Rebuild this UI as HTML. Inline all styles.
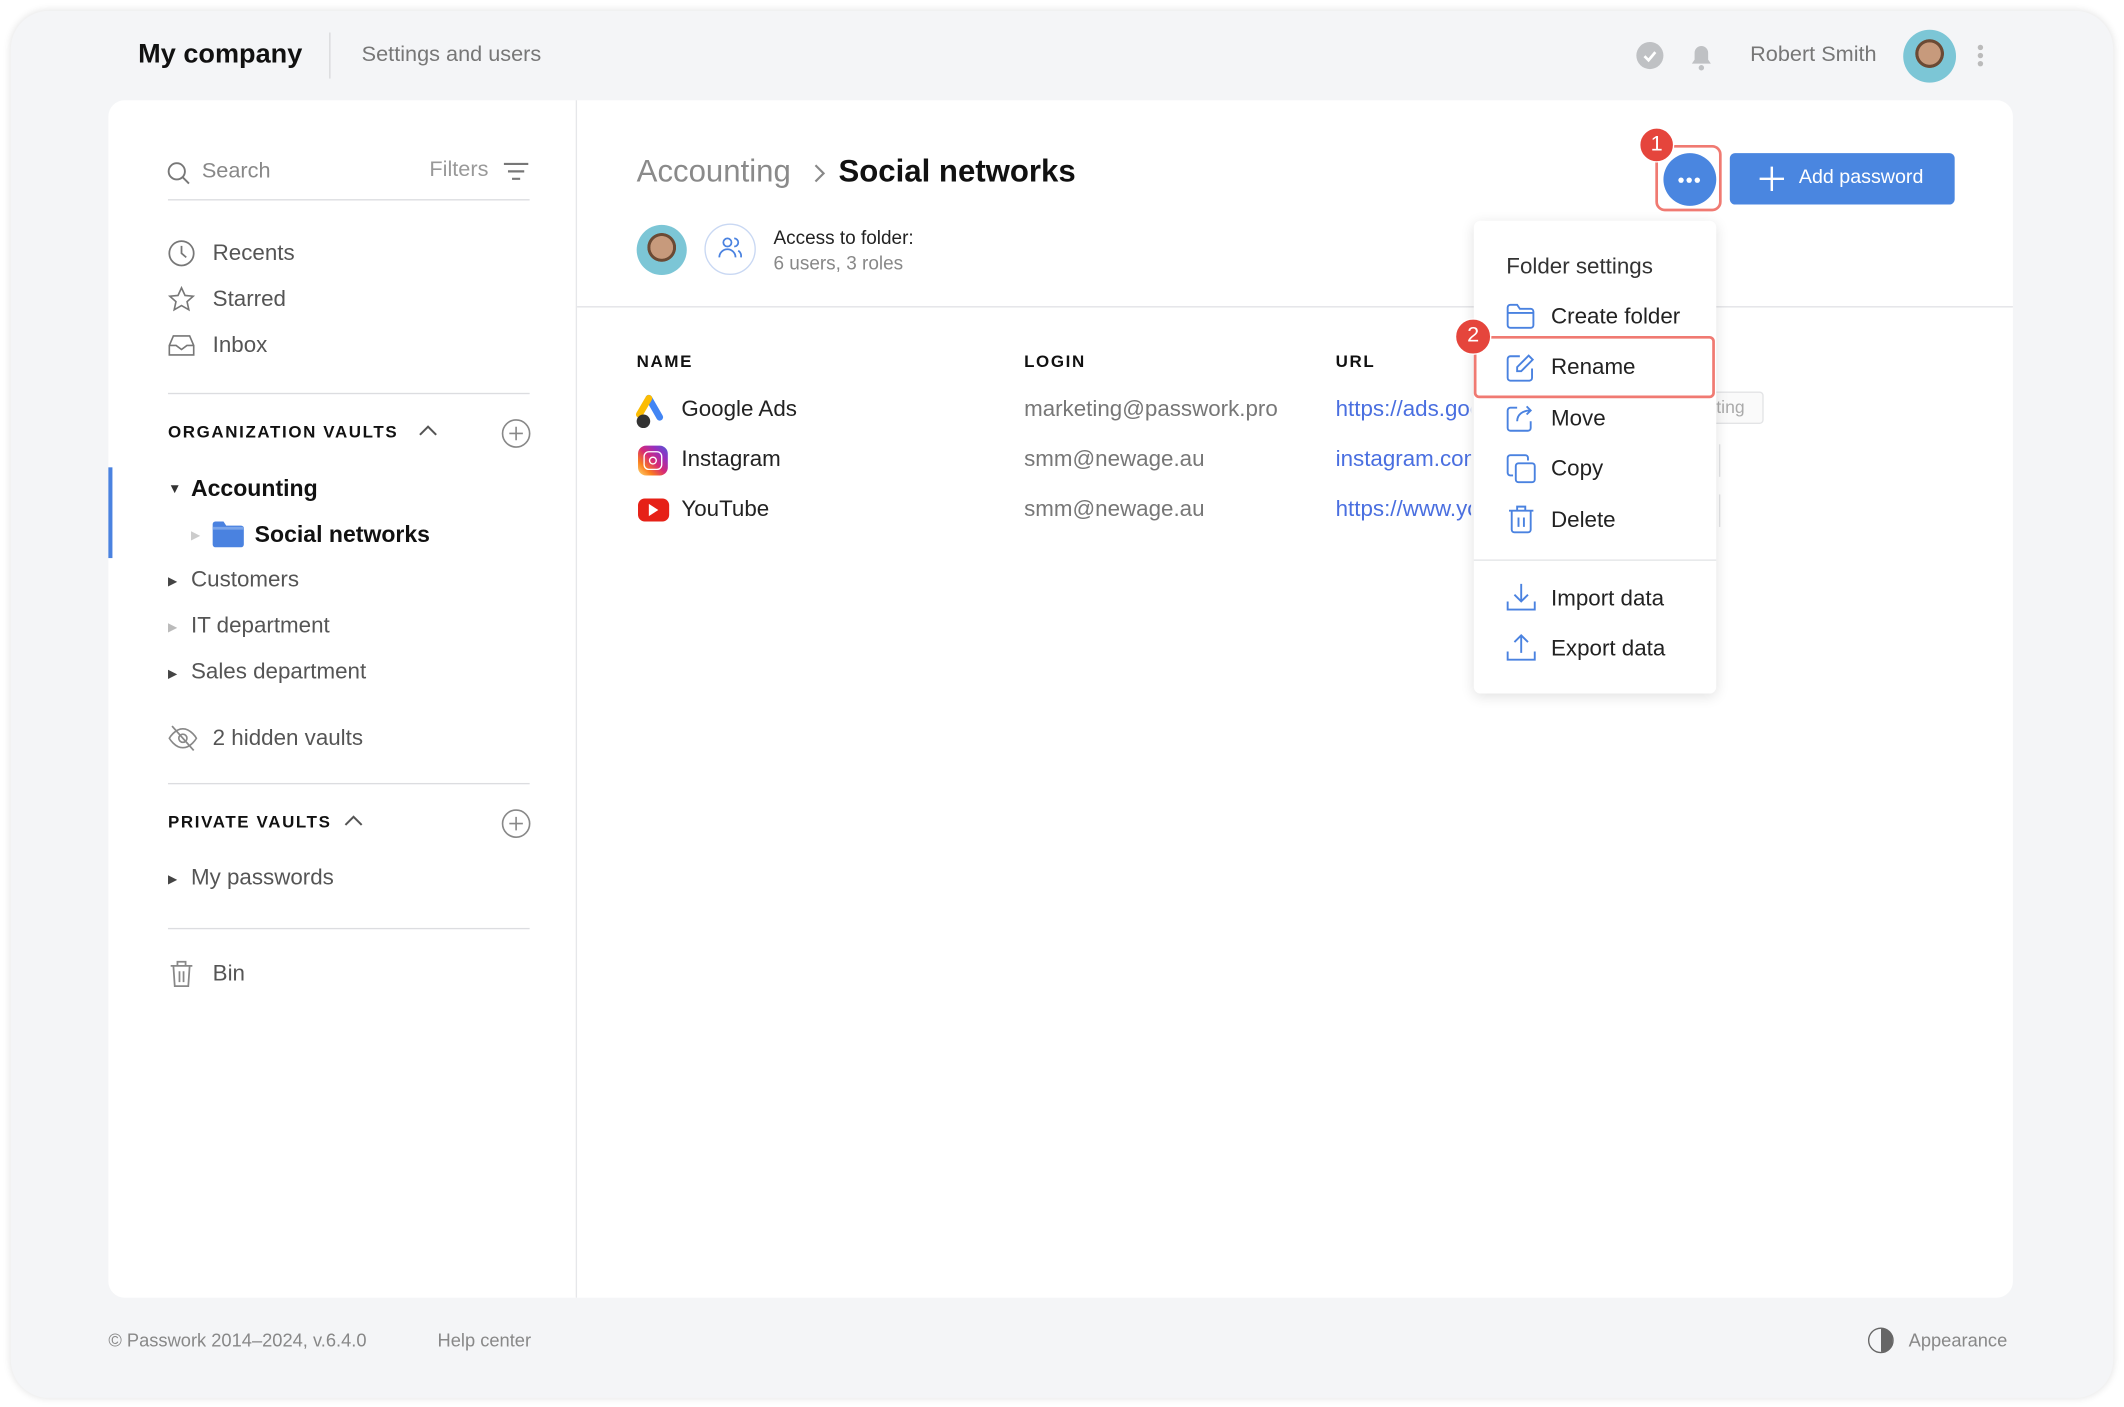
<!DOCTYPE html>
<html><head><meta charset="utf-8"><style>
*{margin:0;padding:0;box-sizing:border-box}
html,body{width:2124px;height:1407px;overflow:hidden;background:#fff;font-family:"Liberation Sans",sans-serif}
#s{position:absolute;left:0;top:0;width:1568px;height:1039px;transform:scale(1.35459);transform-origin:0 0}
.a{position:absolute;white-space:nowrap}
.frame{position:absolute;left:8px;top:8px;width:1552px;height:1024px;background:#f4f5f7;border-radius:28px;box-shadow:0 0 6px rgba(0,0,0,.12)}
.panel{position:absolute;left:80px;top:74px;width:1406px;height:884px;background:#fff;border-radius:12px}
.t17{font-size:16.5px;color:#222}
.g{color:#555}
.hd{font-size:12.5px;font-weight:bold;letter-spacing:1.2px;color:#111}
.mi{font-size:16.5px;color:#222}
svg{position:absolute;overflow:visible}
</style></head><body><div id="s">
<div class="frame"></div>
<!-- top bar -->
<div class="a" style="left:102px;top:29px;font-size:20px;font-weight:bold;color:#111">My company</div>
<div class="a" style="left:243px;top:24px;width:1px;height:34px;background:#d8d9dc"></div>
<div class="a" style="left:267px;top:32px;font-size:16px;color:#777">Settings and users</div>
<div class="a" style="left:1208px;top:31px;width:20px;height:20px;border-radius:50%;background:#bfc1c4"></div>
<svg style="left:1208px;top:31px" width="20" height="20"><path d="M6 10.5l3 3 5-6" stroke="#fff" stroke-width="2" fill="none"/></svg>
<svg style="left:1245px;top:30px" width="22" height="24"><path d="M4 17h14l-2-3V9a5 5 0 0 0-10 0v5z" fill="#bfc1c4"/><circle cx="11" cy="20" r="2" fill="#bfc1c4"/></svg>
<div class="a" style="left:1292px;top:32px;font-size:16px;color:#777">Robert Smith</div>
<div class="a" style="left:1405px;top:22px;width:39px;height:39px;border-radius:50%;background:radial-gradient(circle at 50% 45%,#c79a7c 0 28%,#6b4a34 29% 36%,#7cc6d6 37%)"></div>
<div class="a" style="left:1460px;top:33px;width:4px;height:4px;border-radius:50%;background:#bbb;box-shadow:0 6px 0 #bbb,0 12px 0 #bbb"></div>

<div class="panel"></div>
<div class="a" style="left:425px;top:74px;width:1px;height:884px;background:#e6e7ea"></div>
<div class="a" style="left:426px;top:226px;width:1060px;height:1px;background:#e2e3e6"></div>

<!-- sidebar -->
<svg style="left:123px;top:119px" width="18" height="18"><circle cx="7.5" cy="7.5" r="6" stroke="#777" stroke-width="1.4" fill="none"/><path d="M12 12l4.5 4.5" stroke="#777" stroke-width="1.4"/></svg>
<div class="a" style="left:149px;top:118px;font-size:16px;color:#888">Search</div>
<div class="a" style="left:317px;top:117px;font-size:16px;color:#999">Filters</div>
<svg style="left:372px;top:120px" width="18" height="14"><path d="M0 1h18M3 6.5h12M6 12h6" stroke="#777" stroke-width="1.6"/></svg>
<div class="a" style="left:124px;top:147px;width:267px;height:1px;background:#dcdde0"></div>

<svg style="left:124px;top:177px" width="20" height="20"><circle cx="10" cy="10" r="9" stroke="#777" stroke-width="1.3" fill="none"/><path d="M10 4.5V10l3.5 3" stroke="#777" stroke-width="1.3" fill="none"/></svg>
<div class="a t17 g" style="left:157px;top:178px">Recents</div>
<svg style="left:124px;top:211px" width="20" height="20"><path d="M10 1.5l2.6 5.6 6 .6-4.5 4 1.3 6-5.4-3.1-5.4 3.1 1.3-6-4.5-4 6-.6z" stroke="#777" stroke-width="1.2" fill="none"/></svg>
<div class="a t17 g" style="left:157px;top:212px">Starred</div>
<svg style="left:124px;top:246px" width="20" height="18"><path d="M1 9l3-7h12l3 7v7H1zM1 9h5l4 3 4-3h5" stroke="#777" stroke-width="1.2" fill="none"/></svg>
<div class="a t17 g" style="left:157px;top:246px">Inbox</div>
<div class="a" style="left:124px;top:290px;width:267px;height:1px;background:#dcdde0"></div>

<div class="a hd" style="left:124px;top:312px">ORGANIZATION VAULTS</div>
<svg style="left:309px;top:313px" width="14" height="10"><path d="M1 8l6-6 6 6" stroke="#555" stroke-width="1.5" fill="none"/></svg>
<svg style="left:370px;top:309px" width="22" height="22"><circle cx="11" cy="11" r="10" stroke="#888" stroke-width="1.2" fill="none"/><path d="M11 6v10M6 11h10" stroke="#888" stroke-width="1.2"/></svg>

<div class="a" style="left:80px;top:345px;width:3px;height:67px;background:#4a82e0"></div>
<div class="a" style="left:124px;top:356px;font-size:10px;color:#333">▼</div>
<div class="a" style="left:141px;top:351px;font-size:17px;font-weight:bold;color:#111">Accounting</div>
<div class="a" style="left:141px;top:390px;font-size:9px;color:#ccc">▶</div>
<svg style="left:157px;top:385px" width="23" height="19"><path d="M0 2a2 2 0 0 1 2-2h6l2 3h11a2 2 0 0 1 2 2v12a2 2 0 0 1-2 2H2a2 2 0 0 1-2-2z" fill="#4a82e0"/><path d="M0 5h23" stroke="#7aa5ea" stroke-width="2"/></svg>
<div class="a" style="left:188px;top:385px;font-size:17px;font-weight:bold;color:#111">Social networks</div>
<div class="a" style="left:124px;top:424px;font-size:9px;color:#444">▶</div>
<div class="a t17 g" style="left:141px;top:419px">Customers</div>
<div class="a" style="left:124px;top:458px;font-size:9px;color:#bbb">▶</div>
<div class="a t17 g" style="left:141px;top:453px">IT department</div>
<div class="a" style="left:124px;top:492px;font-size:9px;color:#444">▶</div>
<div class="a t17 g" style="left:141px;top:487px">Sales department</div>
<svg style="left:124px;top:535px" width="22" height="20"><path d="M1 10s4-7 10-7 10 7 10 7-4 7-10 7S1 10 1 10z" stroke="#888" stroke-width="1.2" fill="none"/><circle cx="11" cy="10" r="3" stroke="#888" stroke-width="1.2" fill="none"/><path d="M3 1l16 18" stroke="#888" stroke-width="1.3"/></svg>
<div class="a t17 g" style="left:157px;top:536px">2 hidden vaults</div>
<div class="a" style="left:124px;top:578px;width:267px;height:1px;background:#dcdde0"></div>

<div class="a hd" style="left:124px;top:600px">PRIVATE VAULTS</div>
<svg style="left:254px;top:601px" width="14" height="10"><path d="M1 8l6-6 6 6" stroke="#555" stroke-width="1.5" fill="none"/></svg>
<svg style="left:370px;top:597px" width="22" height="22"><circle cx="11" cy="11" r="10" stroke="#888" stroke-width="1.2" fill="none"/><path d="M11 6v10M6 11h10" stroke="#888" stroke-width="1.2"/></svg>
<div class="a" style="left:124px;top:644px;font-size:9px;color:#444">▶</div>
<div class="a t17 g" style="left:141px;top:639px">My passwords</div>
<div class="a" style="left:124px;top:685px;width:267px;height:1px;background:#dcdde0"></div>
<svg style="left:125px;top:709px" width="18" height="20"><path d="M1 4h16M6 4V1h6v3M3 4l1 15h10l1-15M7.5 8v8M10.5 8v8" stroke="#888" stroke-width="1.3" fill="none"/></svg>
<div class="a t17 g" style="left:157px;top:710px">Bin</div>

<!-- main -->
<div class="a" style="left:470px;top:113px;font-size:23px;color:#8a8a8a">Accounting</div>
<svg style="left:600px;top:121px" width="10" height="14"><path d="M2 1l6 6-6 6" stroke="#888" stroke-width="1.6" fill="none"/></svg>
<div class="a" style="left:619px;top:113px;font-size:23px;font-weight:bold;color:#111">Social networks</div>
<div class="a" style="left:470px;top:166px;width:37px;height:37px;border-radius:50%;background:radial-gradient(circle at 50% 45%,#c79a7c 0 30%,#6b4a34 31% 38%,#7cc6d6 39%)"></div>
<div class="a" style="left:520px;top:165px;width:38px;height:38px;border-radius:50%;border:1px solid #c9d8f3"></div>
<svg style="left:529px;top:173px" width="20" height="20"><circle cx="8" cy="6" r="3" stroke="#4a82e0" stroke-width="1.3" fill="none"/><path d="M2 17a6 6 0 0 1 12 0M13 3a3 3 0 0 1 0 6M16 12a5 5 0 0 1 2 5" stroke="#4a82e0" stroke-width="1.3" fill="none"/></svg>
<div class="a" style="left:571px;top:167px;font-size:14px;color:#222">Access to folder:</div>
<div class="a" style="left:571px;top:186px;font-size:14px;color:#888">6 users, 3 roles</div>

<div class="a hd" style="left:470px;top:260px">NAME</div>
<div class="a hd" style="left:756px;top:260px">LOGIN</div>
<div class="a hd" style="left:986px;top:260px">URL</div>

<svg style="left:467px;top:292px" width="26" height="26"><path d="M12 2l8 14" stroke="#4285f4" stroke-width="5" stroke-linecap="round"/><path d="M12 2L5 14" stroke="#fbbc04" stroke-width="5" stroke-linecap="round"/><circle cx="8" cy="19" r="5" fill="#333"/></svg>
<div class="a t17" style="left:503px;top:293px">Google Ads</div>
<div class="a t17" style="left:756px;top:293px;color:#777">marketing@passwork.pro</div>
<div class="a t17" style="left:986px;top:293px;color:#4a6fe0;width:100px;overflow:hidden">https://ads.google.com</div>
<div class="a" style="left:1264px;top:289px;width:38px;height:24px;border:1px solid #e3e4e6;border-radius:3px;background:#fafafa;font-size:13px;color:#aaa;padding:3px 0 0 2px">ting</div>

<div class="a" style="left:471px;top:329px;width:22px;height:22px;border-radius:6px;background:linear-gradient(45deg,#feda75,#fa7e1e,#d62976,#962fbf,#4f5bd5)"></div>
<div class="a" style="left:475px;top:333px;width:14px;height:14px;border-radius:4px;border:1.5px solid #fff"></div>
<div class="a" style="left:479px;top:337px;width:6px;height:6px;border-radius:50%;border:1.5px solid #fff"></div>
<div class="a t17" style="left:503px;top:330px">Instagram</div>
<div class="a t17" style="left:756px;top:330px;color:#777">smm@newage.au</div>
<div class="a t17" style="left:986px;top:330px;color:#4a6fe0;width:100px;overflow:hidden">instagram.com</div>
<div class="a" style="left:1266px;top:328px;width:4px;height:24px;border-right:1px solid #e3e4e6"></div>

<div class="a" style="left:471px;top:368px;width:23px;height:17px;border-radius:5px;background:#e62117"></div>
<svg style="left:479px;top:372px" width="8" height="9"><path d="M0 0l7 4.5L0 9z" fill="#fff"/></svg>
<div class="a t17" style="left:503px;top:367px">YouTube</div>
<div class="a t17" style="left:756px;top:367px;color:#777">smm@newage.au</div>
<div class="a t17" style="left:986px;top:367px;color:#4a6fe0;width:100px;overflow:hidden">https://www.youtube.com</div>
<div class="a" style="left:1266px;top:365px;width:4px;height:24px;border-right:1px solid #e3e4e6"></div>

<!-- buttons -->
<div class="a" style="left:1222px;top:107px;width:49px;height:49px;border:2px solid #f07a72;border-radius:7px"></div>
<div class="a" style="left:1228px;top:113px;width:39px;height:39px;border-radius:50%;background:#4a86e0"></div>
<div class="a" style="left:1239px;top:131px;width:4px;height:4px;border-radius:50%;background:#fff;box-shadow:6px 0 0 #fff,12px 0 0 #fff"></div>
<div class="a" style="left:1210px;top:94px;width:26px;height:26px;border-radius:50%;background:#e5453c;border:1.5px solid #fff;color:#fff;font-size:16px;text-align:center;line-height:23px">1</div>
<div class="a" style="left:1277px;top:113px;width:166px;height:38px;border-radius:4px;background:#4a86e0"></div>
<svg style="left:1299px;top:123px" width="18" height="18"><path d="M9 0v18M0 9h18" stroke="#fff" stroke-width="1.8"/></svg>
<div class="a" style="left:1328px;top:123px;font-size:14.5px;color:#fff">Add password</div>

<!-- menu -->
<div class="a" style="left:1088px;top:163px;width:179px;height:349px;background:#fff;border-radius:5px;box-shadow:0 2px 10px rgba(0,0,0,.12)"></div>
<div class="a" style="left:1088px;top:413px;width:179px;height:1px;background:#e3e4e6"></div>
<div class="a mi" style="left:1112px;top:188px;color:#333">Folder settings</div>
<svg style="left:1112px;top:224px" width="21" height="19"><path d="M1 3a2 2 0 0 1 2-2h5l2 3h8a2 2 0 0 1 2 2v10a2 2 0 0 1-2 2H3a2 2 0 0 1-2-2zM1 7h19" stroke="#4a82e0" stroke-width="1.4" fill="none"/></svg>
<div class="a mi" style="left:1145px;top:225px">Create folder</div>
<svg style="left:1112px;top:261px" width="21" height="21"><path d="M10 2H3a2 2 0 0 0-2 2v14a2 2 0 0 0 2 2h14a2 2 0 0 0 2-2v-7" stroke="#4a82e0" stroke-width="1.4" fill="none"/><path d="M16.5 1.5l3 3L11 13H8v-3z" stroke="#4a82e0" stroke-width="1.4" fill="none"/></svg>
<div class="a mi" style="left:1145px;top:262px">Rename</div>
<div class="a" style="left:1088px;top:248px;width:178px;height:46px;border:2px solid #f07a72;border-radius:4px"></div>
<div class="a" style="left:1074px;top:235px;width:27px;height:27px;border-radius:50%;background:#e5453c;border:1.5px solid #fff;color:#fff;font-size:16px;text-align:center;line-height:24px">2</div>
<svg style="left:1112px;top:298px" width="21" height="21"><path d="M8 3H3a2 2 0 0 0-2 2v13a2 2 0 0 0 2 2h13a2 2 0 0 0 2-2v-5" stroke="#4a82e0" stroke-width="1.4" fill="none"/><path d="M8 13c0-5 4-8 10-8M15 2l3 3-3 3" stroke="#4a82e0" stroke-width="1.4" fill="none"/></svg>
<div class="a mi" style="left:1145px;top:300px">Move</div>
<svg style="left:1112px;top:335px" width="22" height="22"><path d="M5 16H3a2 2 0 0 1-2-2V3a2 2 0 0 1 2-2h11a2 2 0 0 1 2 2v2" stroke="#4a82e0" stroke-width="1.4" fill="none"/><rect x="7" y="7" width="14" height="14" rx="2" stroke="#4a82e0" stroke-width="1.4" fill="none"/></svg>
<div class="a mi" style="left:1145px;top:337px">Copy</div>
<svg style="left:1113px;top:373px" width="20" height="21"><path d="M1 4h18M7 4V1h6v3M3 4v14a2 2 0 0 0 2 2h10a2 2 0 0 0 2-2V4M8 9v7M12 9v7" stroke="#4a82e0" stroke-width="1.4" fill="none"/></svg>
<div class="a mi" style="left:1145px;top:375px">Delete</div>
<svg style="left:1112px;top:430px" width="22" height="22"><path d="M11 1v13M6 9l5 5 5-5M1 14v6h20v-6" stroke="#4a82e0" stroke-width="1.4" fill="none"/></svg>
<div class="a mi" style="left:1145px;top:433px">Import data</div>
<svg style="left:1112px;top:467px" width="22" height="22"><path d="M11 15V2M6 7l5-5 5 5M1 14v6h20v-6" stroke="#4a82e0" stroke-width="1.4" fill="none"/></svg>
<div class="a mi" style="left:1145px;top:470px">Export data</div>

<!-- footer -->
<div class="a" style="left:80px;top:982px;font-size:13.5px;color:#888">© Passwork 2014–2024, v.6.4.0</div>
<div class="a" style="left:323px;top:982px;font-size:13.5px;color:#888">Help center</div>
<div class="a" style="left:1379px;top:980px;width:19px;height:19px;border-radius:50%;border:1.5px solid #666;background:linear-gradient(90deg,transparent 50%,#666 50%)"></div>
<div class="a" style="left:1409px;top:982px;font-size:13.5px;color:#888">Appearance</div>
</div></body></html>
